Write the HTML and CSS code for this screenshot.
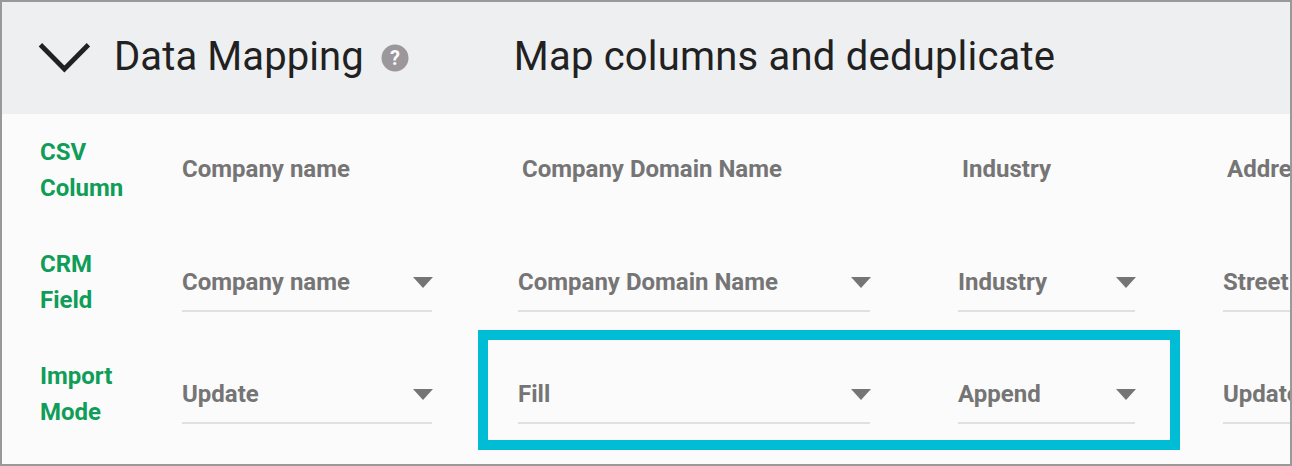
FILE: index.html
```html
<!DOCTYPE html>
<html lang="en">
<head>
<meta charset="utf-8">
<title>Data Mapping</title>
<link rel="stylesheet" href="styles.css">
</head>
<body>
<div class="frame">
  <header class="head">
    <svg class="chevron" width="54" height="30" viewBox="0 0 54 30"><path d="M3.4 1.8 L27.4 26 L51.4 1.8" fill="none" stroke="#212121" stroke-width="4.8"/></svg>
    <h1 class="title">Data Mapping</h1>
    <svg class="help" width="28" height="28" viewBox="0 0 28 28"><circle cx="14" cy="14" r="13.5" fill="#9b979b"/><text x="14" y="21" text-anchor="middle" class="help-mark">?</text></svg>
    <h2 class="subtitle">Map columns and deduplicate</h2>
  </header>
  <div class="table">
    <div class="row">
      <div class="label">CSV<br>Column</div>
      <div class="cell c1"><span class="csv">Company name</span></div>
      <div class="cell c2"><span class="csv">Company Domain Name</span></div>
      <div class="cell c3"><span class="csv">Industry</span></div>
      <div class="cell c4"><span class="csv">Address</span></div>
    </div>
    <div class="row">
      <div class="label">CRM<br>Field</div>
      <div class="cell c1"><div class="select"><span>Company name</span><i class="caret"></i></div></div>
      <div class="cell c2"><div class="select"><span>Company Domain Name</span><i class="caret"></i></div></div>
      <div class="cell c3"><div class="select"><span>Industry</span><i class="caret"></i></div></div>
      <div class="cell c4"><div class="select"><span>Street</span><i class="caret"></i></div></div>
    </div>
    <div class="row">
      <div class="label">Import<br>Mode</div>
      <div class="cell c1"><div class="select"><span>Update</span><i class="caret"></i></div></div>
      <div class="cell c2"><div class="select"><span>Fill</span><i class="caret"></i></div></div>
      <div class="cell c3"><div class="select"><span>Append</span><i class="caret"></i></div></div>
      <div class="cell c4"><div class="select"><span>Update</span><i class="caret"></i></div></div>
    </div>
  </div>
  <div class="highlight"></div>
</div>
</body>
</html>
```
FILE: styles.css
```css
* { box-sizing: border-box; }
html, body { margin: 0; padding: 0; }
body { width: 1292px; height: 466px; overflow: hidden; font-family: Roboto, "Liberation Sans", sans-serif; }
.frame { position: relative; width: 1292px; height: 466px; border: 2px solid #999; background: #fbfbfb; overflow: hidden; }
.head { display: flex; align-items: center; height: 112px; background: #eeeff1; padding: 0 0 4px 35px; }
.chevron { flex: none; margin-right: 23px; margin-top: 4px; }
.title { margin: 2px 0 0; font-size: 40px; font-weight: 400; color: #212121; letter-spacing: 0.1px; white-space: nowrap; line-height: 44px; }
.help { flex: none; margin-left: 17px; margin-right: 105px; margin-top: 4px; }
.help-mark { font: 700 20px Roboto, sans-serif; fill: #fbfbfb; }
.subtitle { margin: 2px 0 0; font-size: 40px; font-weight: 400; color: #212121; letter-spacing: 0.2px; white-space: nowrap; line-height: 44px; }
.table { display: flex; flex-direction: column; }
.row { display: flex; align-items: center; height: 112px; padding-left: 38px; }
.label { flex: none; width: 142px; font-size: 24px; font-weight: 700; line-height: 36px; color: #0f9d58; }
.cell { flex: none; color: #757575; font-size: 24px; font-weight: 700; white-space: nowrap; }
.c1 { width: 336px; }
.c2 { width: 440px; }
.c3 { width: 265px; }
.c4 { width: 200px; }
.csv { display: block; padding-left: 4px; padding-bottom: 2px; }
.c1 .csv { padding-left: 0; }
.select { display: flex; align-items: center; justify-content: space-between; height: 60px; padding-top: 2px; border-bottom: 2px solid #e0e0e0; }
.c1 .select { width: 250px; }
.c2 .select { width: 352px; }
.c3 .select { width: 177px; }
.c4 .select { width: 200px; }
.caret { flex: none; width: 0; height: 0; margin-right: -1px; border-left: 10.5px solid transparent; border-right: 10.5px solid transparent; border-top: 11px solid #757575; }
.highlight { position: absolute; left: 476px; top: 328px; width: 702px; height: 120px; border: 10px solid #00bcd4; }
```
